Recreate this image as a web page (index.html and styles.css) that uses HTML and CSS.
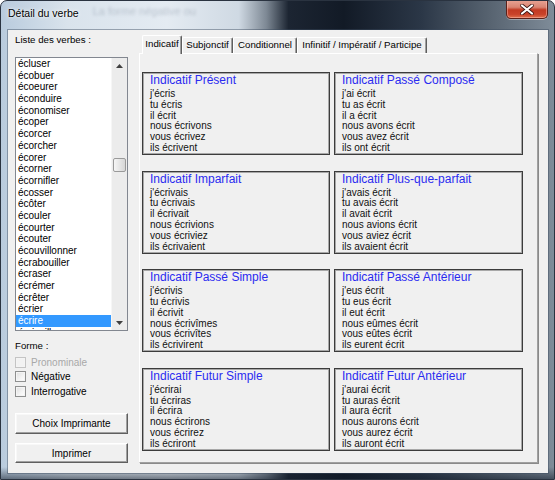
FILE: index.html
```html
<!DOCTYPE html>
<html lang="fr">
<head>
<meta charset="utf-8">
<title>Détail du verbe</title>
<link rel="stylesheet" href="styles.css">
</head>
<body>
<div class="window">
  <div class="titlebar">
    <span class="title">Détail du verbe</span>
    <span class="ghost">La forme négative ou</span>
    <div class="close">
      <svg width="14" height="11" viewBox="0 0 14 11"><path d="M2 1.5 L12 9.5 M12 1.5 L2 9.5" stroke="#3a1410" stroke-width="3.6" stroke-linecap="round"/><path d="M2 1.5 L12 9.5 M12 1.5 L2 9.5" stroke="#ffffff" stroke-width="2.2" stroke-linecap="round"/></svg>
    </div>
  </div>
  <div class="client">
    <div class="left">
      <div class="label">Liste des verbes :</div>
      <div class="listbox">
        <ul class="items">
          <li>écluser</li><li>écobuer</li><li>écoeurer</li><li>éconduire</li><li>économiser</li><li>écoper</li><li>écorcer</li><li>écorcher</li><li>écorer</li><li>écorner</li><li>écornifler</li><li>écosser</li><li>écôter</li><li>écouler</li><li>écourter</li><li>écouter</li><li>écouvillonner</li><li>écrabouiller</li><li>écraser</li><li>écrémer</li><li>écrêter</li><li>écrier</li><li class="sel">écrire</li><li>écrivailler</li>
        </ul>
        <div class="scrollbar">
          <div class="arrow"><svg width="7" height="4" viewBox="0 0 7 4"><path d="M0 4 L3.5 0 L7 4 Z" fill="#404040"/></svg></div>
          <div class="track"><div class="thumb"></div></div>
          <div class="arrow"><svg width="7" height="4" viewBox="0 0 7 4"><path d="M0 0 L3.5 4 L7 0 Z" fill="#404040"/></svg></div>
        </div>
      </div>
      <div class="label forme">Forme :</div>
      <div class="checks">
        <div class="check disabled"><span class="cbox"></span>Pronominale</div>
        <div class="check"><span class="cbox"></span>Négative</div>
        <div class="check"><span class="cbox"></span>Interrogative</div>
      </div>
      <div class="btn first">Choix Imprimante</div>
      <div class="btn second">Imprimer</div>
    </div>
    <div class="right">
      <div class="tabstrip">
        <div class="tab sel t1">Indicatif</div>
        <div class="tab t2">Subjonctif</div>
        <div class="tab t3">Conditionnel</div>
        <div class="tab t4">Infinitif / Impératif / Participe</div>
      </div>
      <div class="panel">
        <div class="grid">
          <div class="box"><div class="btitle">Indicatif Présent</div><div class="line">j'écris</div><div class="line">tu écris</div><div class="line">il écrit</div><div class="line">nous écrivons</div><div class="line">vous écrivez</div><div class="line">ils écrivent</div></div>
          <div class="box"><div class="btitle">Indicatif Passé Composé</div><div class="line">j'ai écrit</div><div class="line">tu as écrit</div><div class="line">il a écrit</div><div class="line">nous avons écrit</div><div class="line">vous avez écrit</div><div class="line">ils ont écrit</div></div>
          <div class="box"><div class="btitle">Indicatif Imparfait</div><div class="line">j'écrivais</div><div class="line">tu écrivais</div><div class="line">il écrivait</div><div class="line">nous écrivions</div><div class="line">vous écriviez</div><div class="line">ils écrivaient</div></div>
          <div class="box"><div class="btitle">Indicatif Plus-que-parfait</div><div class="line">j'avais écrit</div><div class="line">tu avais écrit</div><div class="line">il avait écrit</div><div class="line">nous avions écrit</div><div class="line">vous aviez écrit</div><div class="line">ils avaient écrit</div></div>
          <div class="box"><div class="btitle">Indicatif Passé Simple</div><div class="line">j'écrivis</div><div class="line">tu écrivis</div><div class="line">il écrivit</div><div class="line">nous écrivîmes</div><div class="line">vous écrivîtes</div><div class="line">ils écrivirent</div></div>
          <div class="box"><div class="btitle">Indicatif Passé Antérieur</div><div class="line">j'eus écrit</div><div class="line">tu eus écrit</div><div class="line">il eut écrit</div><div class="line">nous eûmes écrit</div><div class="line">vous eûtes écrit</div><div class="line">ils eurent écrit</div></div>
          <div class="box"><div class="btitle">Indicatif Futur Simple</div><div class="line">j'écrirai</div><div class="line">tu écriras</div><div class="line">il écrira</div><div class="line">nous écrirons</div><div class="line">vous écrirez</div><div class="line">ils écriront</div></div>
          <div class="box"><div class="btitle">Indicatif Futur Antérieur</div><div class="line">j'aurai écrit</div><div class="line">tu auras écrit</div><div class="line">il aura écrit</div><div class="line">nous aurons écrit</div><div class="line">vous aurez écrit</div><div class="line">ils auront écrit</div></div>
        </div>
      </div>
    </div>
  </div>
</div>
</body>
</html>
```

FILE: styles.css
```css
html, body {
  margin: 0;
  padding: 0;
  background: #ffffff;
}
body {
  width: 555px;
  height: 480px;
  overflow: hidden;
  font-family: "Liberation Sans", Arial, sans-serif;
  color: #000;
}
.window {
  width: 555px;
  height: 480px;
  box-sizing: border-box;
  border: 1px solid #2a3340;
  border-radius: 7px 7px 0 0;
  background:
    linear-gradient(180deg, rgba(0,0,0,0) 0%, rgba(0,0,0,0) 97.5%, rgba(20,30,45,0.55) 100%),
    linear-gradient(90deg, #b9cbdd 0%, #d9e3ec 12%, #e4ebf2 30%, #cfd9e3 43%, #7d8894 48%, #1c2532 52%, #121a26 62%, #2b3747 76%, #56626f 88%, #7f8c99 100%);
  display: flex;
  flex-direction: column;
  overflow: hidden;
}
.titlebar {
  height: 29px;
  flex: none;
  display: flex;
  align-items: flex-start;
  padding-left: 7px;
}
.title {
  margin-top: 6px;
  font-size: 10.5px;
  line-height: 13px;
  color: #000;
  text-shadow: 0 0 5px rgba(255,255,255,0.9), 0 0 2px rgba(255,255,255,0.9);
  white-space: nowrap;
}
.ghost {
  margin: 4px 0 0 14px;
  font-size: 11px;
  color: rgba(80,95,115,0.28);
  filter: blur(1.4px);
  white-space: nowrap;
  flex: 1;
}
.close {
  width: 42px;
  height: 19px;
  margin-top: -1px;
  margin-right: 6px;
  box-sizing: border-box;
  border: 1px solid #5b2119;
  border-top: none;
  border-radius: 0 0 5px 5px;
  background: linear-gradient(180deg, #e9a595 0%, #d98472 40%, #c23a22 55%, #c9432a 80%, #e0704c 100%);
  box-shadow: inset 0 0 0 1px rgba(255,200,190,0.45), 0 1px 0 rgba(255,255,255,0.35);
  display: flex;
  align-items: center;
  justify-content: center;
}
.client {
  flex: 1;
  margin: 0 6px 6px 7px;
  background: #f0f0f0;
  display: flex;
  box-shadow: 0 0 0 1px rgba(60,75,95,0.45);
}
.left {
  width: 113px;
  padding: 4px 0 0 7px;
  margin-right: 11px;
  display: flex;
  flex-direction: column;
}
.label {
  font-size: 9.7px;
  line-height: 12px;
  height: 12px;
  white-space: nowrap;
}
.listbox {
  margin-top: 11px;
  height: 274px;
  flex: none;
  box-sizing: border-box;
  border: 1px solid #828790;
  background: #ffffff;
  display: flex;
}
.items {
  flex: 1;
  list-style: none;
  margin: 0;
  padding: 0;
  overflow: hidden;
}
.items li {
  height: 11.7px;
  line-height: 11.7px;
  padding-left: 2px;
  font-size: 10px;
  white-space: nowrap;
}
.items li.sel {
  background: #3399ff;
  color: #ffffff;
}
.scrollbar {
  width: 15px;
  flex: none;
  background: #ececec;
  border-left: 1px solid #f6f6f6;
  display: flex;
  flex-direction: column;
}
.arrow {
  height: 15px;
  flex: none;
  display: flex;
  align-items: center;
  justify-content: center;
}
.track {
  flex: 1;
  padding: 0 1px;
}
.thumb {
  margin-top: 85px;
  height: 14px;
  box-sizing: border-box;
  border: 1px solid #9a9a9a;
  border-radius: 2px;
  background: linear-gradient(90deg, #f6f6f6 0%, #e6e6e6 50%, #d6d6d6 100%);
}
.forme {
  margin-top: 9px;
}
.checks {
  margin-top: 3px;
  display: flex;
  flex-direction: column;
}
.check {
  height: 14.5px;
  display: flex;
  align-items: center;
  gap: 5px;
  font-size: 10px;
  white-space: nowrap;
}
.cbox {
  width: 11px;
  height: 11px;
  box-sizing: border-box;
  border: 1px solid #8e8f8f;
  background: linear-gradient(135deg, #dedede 0%, #f4f4f4 60%, #ffffff 100%);
  box-shadow: inset 0 0 0 1px #f4f4f4;
}
.check.disabled {
  color: #a8a8a8;
}
.check.disabled .cbox {
  border-color: #c4c4c4;
  background: #f2f2f2;
}
.btn {
  box-sizing: border-box;
  border: 1px solid;
  border-color: #ffffff #5f5f5f #5f5f5f #ffffff;
  box-shadow: inset -1px -1px 0 #a0a0a0, inset 1px 1px 0 #f8f8f8;
  background: #f0f0f0;
  display: flex;
  align-items: center;
  justify-content: center;
  font-size: 10px;
  white-space: nowrap;
}
.btn.first {
  margin-top: 14.5px;
  height: 21px;
}
.btn.second {
  margin-top: 9px;
  height: 20px;
}
.right {
  width: 400px;
  padding-top: 5px;
  display: flex;
  flex-direction: column;
}
.tabstrip {
  height: 18px;
  flex: none;
  display: flex;
  align-items: flex-end;
  padding-left: 3px;
  position: relative;
  z-index: 1;
}
.tab {
  height: 16px;
  box-sizing: border-box;
  border: 1px solid;
  border-color: #ffffff #5f5f5f transparent #ffffff;
  border-bottom: none;
  border-radius: 2px 2px 0 0;
  box-shadow: inset -1px 0 0 #a0a0a0;
  background: #f0f0f0;
  font-size: 9.7px;
  line-height: 12px;
  padding-bottom: 2px;
  display: flex;
  align-items: center;
  justify-content: center;
  white-space: nowrap;
}
.tab.sel {
  height: 19px;
  margin-bottom: -1px;
  padding-bottom: 3px;
}
.t1 { width: 40px; }
.t2 { width: 51px; }
.t3 { width: 64px; }
.t4 { width: 130px; }
.panel {
  width: 399px;
  height: 410px;
  box-sizing: border-box;
  border: 1px solid;
  border-color: #ffffff #a0a0a0 #a0a0a0 #ffffff;
  box-shadow: 1px 1px 0 #8a8a8a;
  background: #f0f0f0;
}
.grid {
  padding: 18px 0 0 2px;
  display: grid;
  grid-template-columns: 188px 189px;
  grid-template-rows: repeat(4, 83px);
  column-gap: 4px;
  row-gap: 15.6px;
}
.box {
  box-sizing: border-box;
  border: 1px solid #3c3c3c;
  box-shadow: inset 0 0 0 1px #a8a8a8;
  padding: 0 0 0 7px;
  background: #f0f0f0;
}
.btitle {
  font-size: 12px;
  line-height: 14px;
  color: #2b2bf0;
  margin-bottom: 2px;
  white-space: nowrap;
}
.line {
  font-size: 10px;
  line-height: 10.8px;
  color: #111111;
  white-space: nowrap;
}
```
